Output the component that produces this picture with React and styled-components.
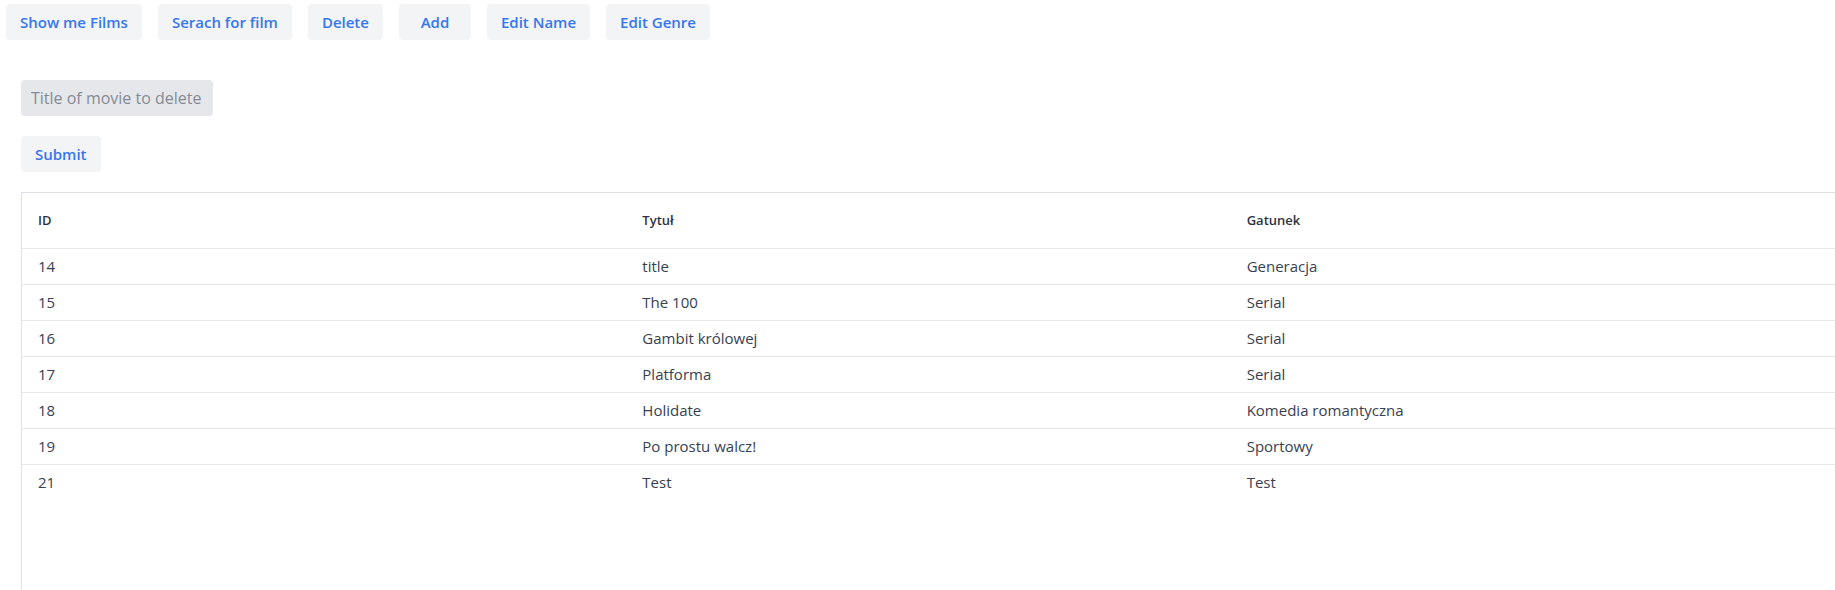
import React from "react";
import styled, { createGlobalStyle } from "styled-components";

const GlobalStyle = createGlobalStyle`
  html { overflow-x: hidden; }
  body {
    margin: 0;
    background: #ffffff;
    font-family: "Open Sans", "Noto Sans", "Liberation Sans", sans-serif;
    color: #374151;
  }
  * { box-sizing: border-box; }
`;

const Page = styled.div`
  display: flex;
  flex-direction: column;
`;

const Toolbar = styled.nav`
  display: flex;
  gap: 16px;
  padding: 4px 6px 0;
`;

const Button = styled.button`
  min-width: 72px;
  height: 36px;
  padding: 0 14px;
  border: none;
  border-radius: 4px;
  background: #f3f4f6;
  color: #3577f1;
  font-family: inherit;
  font-size: 15px;
  font-weight: 600;
  text-align: center;
  cursor: pointer;
`;

const Form = styled.form`
  display: flex;
  flex-direction: column;
  align-items: flex-start;
  gap: 20px;
  padding: 40px 21px 0;
`;

const Input = styled.input`
  width: 192px;
  height: 36px;
  padding: 0 10px;
  border: none;
  border-radius: 4px;
  background: #e5e7eb;
  font-family: inherit;
  font-size: 16px;
  color: #374151;
  outline: none;
  &::placeholder {
    color: #858b95;
  }
`;

const TableBox = styled.div`
  margin: 20px 0 0 21px;
  width: 1815px;
  min-height: 420px;
  border: 1px solid #dcdfe4;
`;

const Table = styled.table`
  width: 100%;
  border-collapse: collapse;
  table-layout: fixed;
`;

const Th = styled.th`
  text-align: left;
  padding: 0 16px;
  height: 55px;
  font-size: 13px;
  font-weight: 600;
  color: #2d3440;
  border-bottom: 1px solid #e5e7eb;
`;

const Td = styled.td`
  padding: 0 16px;
  height: 36px;
  font-size: 15px;
  color: #374151;
  border-bottom: ${(p) => (p.$last ? "none" : "1px solid #e5e7eb")};
`;

const films = [
  [14, "title", "Generacja"],
  [15, "The 100", "Serial"],
  [16, "Gambit królowej", "Serial"],
  [17, "Platforma", "Serial"],
  [18, "Holidate", "Komedia romantyczna"],
  [19, "Po prostu walcz!", "Sportowy"],
  [21, "Test", "Test"],
];

const actions = ["Show me Films", "Serach for film", "Delete", "Add", "Edit Name", "Edit Genre"];

export default function App() {
  return (
    <Page>
      <GlobalStyle />
      <Toolbar>
        {actions.map((a) => (
          <Button key={a} type="button">{a}</Button>
        ))}
      </Toolbar>
      <Form onSubmit={(e) => e.preventDefault()}>
        <Input placeholder="Title of movie to delete" />
        <Button type="submit">Submit</Button>
      </Form>
      <TableBox>
        <Table>
          <thead>
            <tr>
              <Th>ID</Th>
              <Th>Tytuł</Th>
              <Th>Gatunek</Th>
            </tr>
          </thead>
          <tbody>
            {films.map((f, i) => (
              <tr key={f[0]}>
                <Td $last={i === films.length - 1}>{f[0]}</Td>
                <Td $last={i === films.length - 1}>{f[1]}</Td>
                <Td $last={i === films.length - 1}>{f[2]}</Td>
              </tr>
            ))}
          </tbody>
        </Table>
      </TableBox>
    </Page>
  );
}
